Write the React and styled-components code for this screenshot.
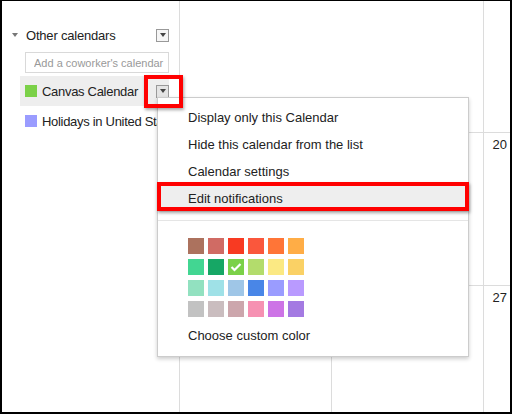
import React from 'react'
import styled, { createGlobalStyle } from 'styled-components'

const GlobalStyle = createGlobalStyle`
  * { box-sizing: border-box; }
  html, body { margin: 0; padding: 0; background: #fff; }
  body {
    font-family: "Liberation Sans", Arial, sans-serif;
    font-size: 13px;
    color: #222;
  }
`

const palette = [
  ['#ac725e', '#d06b64', '#f83a22', '#fa573c', '#ff7537', '#ffad46'],
  ['#42d692', '#16a765', '#7bd148', '#b3dc6c', '#fbe983', '#fad165'],
  ['#92e1c0', '#9fe1e7', '#9fc6e7', '#4986e7', '#9a9cff', '#b99aff'],
  ['#c2c2c2', '#cabdbf', '#cca6ac', '#f691b2', '#cd74e6', '#a47ae2'],
]

const Frame = styled.div`
  position: relative;
  width: 512px;
  height: 414px;
  border: 2px solid #000;
  border-top-width: 1px;
  display: grid;
  grid-template-columns: 177px 1fr;
  overflow: hidden;
  background: #fff;
`

// левая колонка со списком календарей
const Sidebar = styled.aside`
  display: flex;
  flex-direction: column;
  padding: 23px 10px 0 10px;
  letter-spacing: -0.2px;
`

const Header = styled.div`
  display: flex;
  align-items: center;
  height: 22px;
`

const Caret = styled.span`
  width: 0;
  height: 0;
  border-left: 3px solid transparent;
  border-right: 3px solid transparent;
  border-top: 4px solid #777;
`

const HeaderTitle = styled.span`
  margin-left: 8px;
`

const DropButton = styled.span`
  margin-left: auto;
  width: 13px;
  height: 13px;
  border: 1px solid #999;
  background: ${p => p.$active ? '#e4e4e4' : '#f6f6f6'};
  display: flex;
  align-items: center;
  justify-content: center;
  &::after {
    content: '';
    border-left: 3.5px solid transparent;
    border-right: 3.5px solid transparent;
    border-top: 4px solid #444;
  }
`

const AddInput = styled.input`
  margin: 6px 0 0 13px;
  height: 21px;
  border: 1px solid #d9d9d9;
  padding: 0 0 0 8px;
  font-family: inherit;
  font-size: 11px;
  outline: none;
  &::placeholder { color: #999; }
`

const CalRow = styled.div`
  display: flex;
  align-items: center;
  height: 30px;
  margin: ${p => p.$first ? '3px' : '0'} 0 0 8px;
  padding-left: 5px;
  background: ${p => p.$hover ? '#eee' : 'transparent'};
  white-space: nowrap;
`

const Swatch = styled.span`
  flex: none;
  width: 12px;
  height: 12px;
  background: ${p => p.$color};
`

const CalName = styled.span`
  margin-left: 5px;
  letter-spacing: -0.3px;
`

// сетка месяца
const Month = styled.section`
  display: grid;
  grid-template-columns: 152px 152px 1fr;
  grid-template-rows: 131px 153px 1fr;
`

const Cell = styled.div`
  border-left: ${p => p.$noLine ? 'none' : '1px solid #dcdcdc'};
  border-top: ${p => p.$top ? 'none' : '1px solid #dcdcdc'};
  text-align: right;
  padding: 4px 3px 0 0;
`

// выпадающее меню календаря
const Menu = styled.div`
  position: absolute;
  left: 155px;
  top: 96px;
  width: 312px;
  background: #fff;
  border: 1px solid #ccc;
  box-shadow: 0 2px 4px rgba(0, 0, 0, 0.2);
  padding: 6px 0 7px;
`

const MenuItem = styled.div`
  height: 27px;
  line-height: 27px;
  padding-left: 30px;
  background: ${p => p.$active ? '#eee' : 'transparent'};
  margin-top: ${p => p.$gap || 0}px;
`

const Separator = styled.div`
  height: 1px;
  margin-top: 8px;
  background: #e5e5e5;
`

const Palette = styled.div`
  display: grid;
  grid-template-columns: repeat(6, 16px);
  column-gap: 4px;
  row-gap: 5px;
  margin-top: 17px;
  padding-left: 30px;
`

const Chip = styled.span`
  width: 16px;
  height: 16px;
  background: ${p => p.$color};
  display: flex;
`

// красные рамки-пометки поверх скриншота
const Mark = styled.div`
  position: absolute;
  border: 4px solid #f00;
  box-shadow: 1px 2px 3px rgba(0, 0, 0, 0.35);
`

const Check = () => (
  <svg width="16" height="16" viewBox="0 0 16 16">
    <path d="M3.5 8 L6.5 11 L12.5 5" fill="none" stroke="#fff" strokeWidth="2.2" />
  </svg>
)

const App = () => {
  const menuItems = ['Display only this Calendar', 'Hide this calendar from the list', 'Calendar settings', 'Edit notifications']

  return (
    <>
      <GlobalStyle />
      <Frame>
        <Sidebar>
          <Header>
            <Caret />
            <HeaderTitle>Other calendars</HeaderTitle>
            <DropButton />
          </Header>
          <AddInput placeholder="Add a coworker's calendar" />
          <CalRow $first $hover>
            <Swatch $color="#7bd148" />
            <CalName>Canvas Calendar</CalName>
            <DropButton $active />
          </CalRow>
          <CalRow>
            <Swatch $color="#9a9cff" />
            <CalName>Holidays in United States</CalName>
          </CalRow>
        </Sidebar>
        <Month>
          {
            [...Array(9)].map((_, i) => (
              <Cell key={i} $top={i < 3} $noLine={i === 1}>
                {i === 5 ? '20' : i === 8 ? '27' : ''}
              </Cell>
            ))
          }
        </Month>

        <Menu>
          {
            menuItems.map((t, i) => <MenuItem key={t} $active={i === 3}>{t}</MenuItem>)
          }
          <Separator />
          <Palette>
            {
              palette.flat().map(c => (
                <Chip key={c} $color={c}>{c === '#7bd148' && <Check />}</Chip>
              ))
            }
          </Palette>
          <MenuItem $gap={5}>Choose custom color</MenuItem>
        </Menu>

        <Mark style={{ left: 142, top: 74, width: 39, height: 33 }} />
        <Mark style={{ left: 155, top: 181, width: 312, height: 29 }} />
      </Frame>
    </>
  )
}

export default App
